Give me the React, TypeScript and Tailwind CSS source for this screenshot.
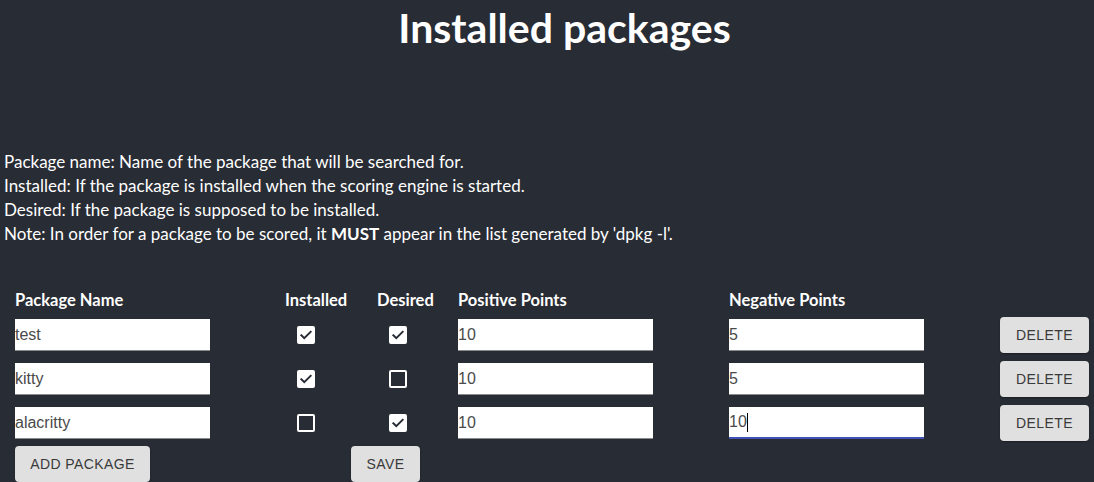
import { useState } from "react";

type Pkg = {
  name: string;
  installed: boolean;
  desired: boolean;
  positive: string;
  negative: string;
};

const ROWS: Pkg[] = [
  { name: "test", installed: true, desired: true, positive: "10", negative: "5" },
  { name: "kitty", installed: true, desired: false, positive: "10", negative: "5" },
  { name: "alacritty", installed: false, desired: true, positive: "10", negative: "10" },
];

function Check({ on }: { on: boolean }) {
  if (!on) {
    return <div className="w-[18px] h-[18px] rounded-[2px] border-2 border-white" />;
  }
  return (
    <div className="w-[18px] h-[18px] rounded-[2px] bg-white flex items-center justify-center">
      <svg width="14" height="14" viewBox="0 0 24 24" fill="none">
        <path d="M4 12.5l5 5L20 6.5" stroke="#282c34" strokeWidth="3.4" strokeLinecap="square" />
      </svg>
    </div>
  );
}

function Field({ value, focused }: { value: string; focused?: boolean }) {
  return (
    <div
      className={`w-[195px] h-[32px] bg-white flex items-center text-[16px] text-[#4a4a4a] font-['Liberation_Sans',Arial,sans-serif] ${
        focused ? "border-b-2 border-[#3f51b5]" : "border-b border-[#8a8a8a]"
      }`}
    >
      <span>{value}</span>
      {focused && <span className="w-px h-[19px] bg-black" />}
    </div>
  );
}

function Btn({ children, className = "" }: { children: React.ReactNode; className?: string }) {
  return (
    <button
      className={`h-[36px] rounded-[4px] bg-[#e0e0e0] text-[#3a3a3a] text-[14px] tracking-[0.4px] font-['Liberation_Sans',Arial,sans-serif] shadow-[0_1px_2px_rgba(0,0,0,0.35)] ${className}`}
    >
      {children}
    </button>
  );
}

export default function App() {
  const [rows] = useState(ROWS);

  return (
    <div className="w-[1094px] h-[482px] bg-[#282c34] text-white font-['Lato',sans-serif] overflow-hidden">
      <h1 className="pl-[35px] pt-[3px] text-center text-[41px] font-bold leading-[50px]">Installed packages</h1>

      <div className="mt-[97px] pl-[4px] text-[17px] leading-[24px]">
        <p>Package name: Name of the package that will be searched for.</p>
        <p>Installed: If the package is installed when the scoring engine is started.</p>
        <p>Desired: If the package is supposed to be installed.</p>
        <p>
          Note: In order for a package to be scored, it <b>MUST</b> appear in the list generated by 'dpkg -l'.
        </p>
      </div>

      <div className="mt-[41px] pl-[15px]">
        <div className="grid grid-cols-[270px_92px_81px_271px_271px_94px] h-[26px] items-center text-[16.5px] font-bold">
          <div>Package Name</div>
          <div>Installed</div>
          <div>Desired</div>
          <div>Positive Points</div>
          <div>Negative Points</div>
          <div />
        </div>
        {rows.map((r, i) => (
          <div
            key={r.name}
            className="grid grid-cols-[270px_92px_81px_271px_271px_94px] h-[44px] items-center"
          >
            <Field value={r.name} />
            <div className="pl-[12px]">
              <Check on={r.installed} />
            </div>
            <div className="pl-[12px]">
              <Check on={r.desired} />
            </div>
            <Field value={r.positive} />
            <Field value={r.negative} focused={i === 2} />
            <Btn className="w-[89px]">DELETE</Btn>
          </div>
        ))}
        <div className="flex items-center h-[38px]">
          <Btn className="w-[135px]">ADD PACKAGE</Btn>
          <Btn className="ml-[201px] w-[69px]">SAVE</Btn>
        </div>
      </div>
    </div>
  );
}
